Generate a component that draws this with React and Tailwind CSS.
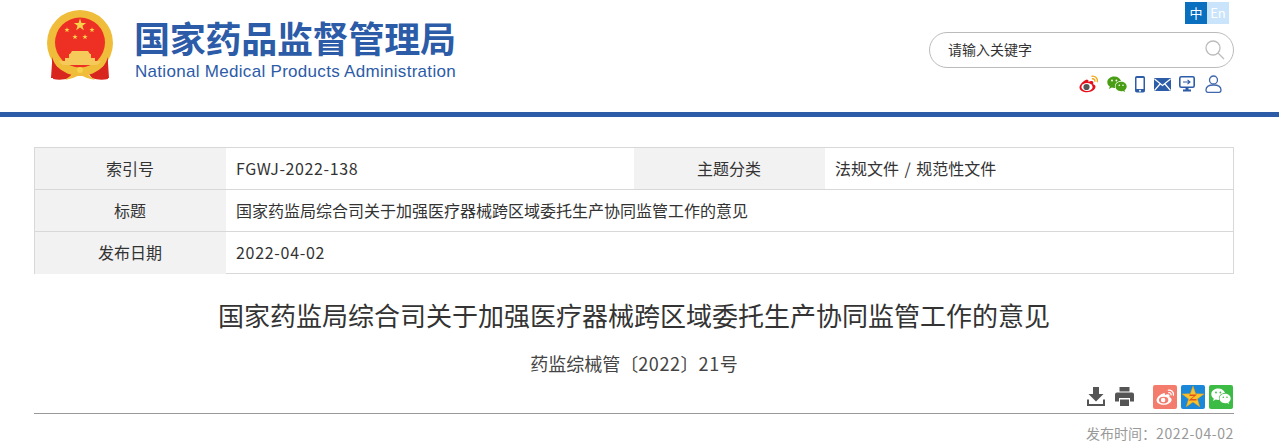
import React from 'react';

const cjk = { fontFamily: '"Noto Sans CJK SC", sans-serif' };

const star = (cx, cy, r, rot = 0) => {
  const pts = [];
  for (let i = 0; i < 10; i++) {
    const rad = i % 2 ? r * 0.4 : r;
    const a = ((-90 + i * 36 + rot) * Math.PI) / 180;
    pts.push(`${(cx + rad * Math.cos(a)).toFixed(2)},${(cy + rad * Math.sin(a)).toFixed(2)}`);
  }
  return pts.join(' ');
};

const Emblem = () => (
  <svg width="67" height="71" viewBox="0 0 67 71">
    <path d="M8 52l-2 17c5 1 11 1 16-1l4-5h15l4 5c5 2 11 2 16 1l-2-17z" fill="#d8261f" />
    <circle cx="33" cy="33" r="33" fill="#f0bd3a" />
    <circle cx="33" cy="32.500" r="25" fill="#ee2f24" />
    <polygon points={star(33, 15, 6.5)} fill="#f8d24a" />
    <polygon points={star(20, 20, 2.8)} fill="#f8d24a" />
    <polygon points={star(45, 20, 2.8)} fill="#f8d24a" />
    <polygon points={star(28, 27, 2.8)} fill="#f8d24a" />
    <polygon points={star(38, 27, 2.8)} fill="#f8d24a" />
    <path d="M25 41h16l2 3H23zM22 44h22v4H22zM18 48h30v3H18zM12 51h42v4H12z" fill="#f5c95a" />
    <path d="M5 47c3 9 6 11 9 14l-1 6c-3 1-6 1-9 1l1-15zM61 47c-3 9-6 11-9 14l1 6c3 1 6 1 9 1l-1-15z" fill="#d8261f" />
    <path d="M9 50c6 8 14 11 24 11s18-3 24-11" fill="none" stroke="#f0bd3a" strokeWidth="2.500" />
    <path d="M24 59h18l-3 5H27zM18 70l9-7h12l9 7-8-2-7-3-7 3z" fill="#f0bd3a" />
    <circle cx="33" cy="60" r="3" fill="#f8d24a" />
  </svg>
);

const WeiboHead = () => (
  <svg width="20" height="18" viewBox="0 0 20 18">
    <path d="M8 4.500C4.500 5.500 0.500 9.500 0.500 12.500c0 3 3.700 4.800 7.500 4.800 4.500 0 8.500-2.800 8.500-5.500 0-1.500-1.300-2.300-2.400-2.600.5-1.500.3-2.700-1-3.100-1-.3-2.600.2-3.600.8.200-1.300-.2-2.800-1.500-1.900z" fill="#e3101c" />
    <ellipse cx="8" cy="12" rx="5.600" ry="4" fill="#fff" />
    <circle cx="7.500" cy="12" r="3.100" fill="#555" />
    <path d="M13 1.200c3-.5 6 2 5.400 5.400M13.500 3.800c1.500-.2 2.600 1 2.400 2.400" fill="none" stroke="#f2a91a" strokeWidth="1.400" strokeLinecap="round" />
  </svg>
);

const WechatPair = ({ a, b, eye, size = 20 }) => (
  <svg width={size} height={size * 0.85} viewBox="0 0 20 17">
    <path d="M7.200 0.500C3.300 0.500 0.300 3 0.300 6.200c0 1.800 1 3.400 2.500 4.400L2 13l2.800-1.400c.8.200 1.600.3 2.400.3.300 0 .6 0 .9 0a5.300 5.300 0 01-.2-1.400C7.900 7.300 10.800 5 14 5.100 13.300 2.400 10.500.5 7.200.5z" fill={a} />
    <path d="M19.700 10.500c0-2.700-2.600-4.700-5.600-4.700-3.100 0-5.600 2-5.600 4.700s2.500 4.700 5.600 4.700c.6 0 1.300-.1 1.900-.3l2.100 1.200-.6-1.900c1.400-.9 2.200-2.200 2.200-3.700z" fill={b} />
    <circle cx="5" cy="4.500" r=".9" fill={eye} />
    <circle cx="9.400" cy="4.500" r=".9" fill={eye} />
    <circle cx="12.300" cy="9.300" r=".8" fill={eye} />
    <circle cx="16" cy="9.300" r=".8" fill={eye} />
  </svg>
);

const Phone = () => (
  <svg width="10" height="17" viewBox="0 0 10 17">
    <rect x="0" y="0" width="10" height="16.500" rx="1.800" fill="#2d5ca8" />
    <rect x="1.500" y="2" width="7" height="11" fill="#fff" />
    <circle cx="5" cy="14.800" r="1" fill="#fff" />
  </svg>
);

const Mail = () => (
  <svg width="17" height="13" viewBox="0 0 17 13">
    <rect width="17" height="13" rx="1" fill="#2d5ca8" />
    <path d="M0.500 1l8 6.500 8-6.500M0.500 12.500l5.500-6.500M16.500 12.500l-5.500-6.500" fill="none" stroke="#fff" strokeWidth="1.200" />
  </svg>
);

const Monitor = () => (
  <svg width="16" height="16" viewBox="0 0 16 16">
    <rect x="0.800" y="0.800" width="14.400" height="10.400" rx="1.500" fill="#fff" stroke="#2d5ca8" strokeWidth="1.600" />
    <path d="M6.500 11.500h3v2h-3zM4 13.500h8V15.500H4z" fill="#2d5ca8" />
    <path d="M4 6h7M8.500 3.800L11 6 8.500 8.200" fill="none" stroke="#2d5ca8" strokeWidth="1.100" />
  </svg>
);

const User = () => (
  <svg width="17" height="18" viewBox="0 0 17 18">
    <circle cx="8.500" cy="5" r="4" fill="none" stroke="#3e67ad" strokeWidth="1.300" />
    <path d="M1 15c0-3 3-5 7.500-5s7.500 2 7.500 5c0 1.500-.8 2.300-2 2.300H3c-1.200 0-2-.8-2-2.300z" fill="none" stroke="#3e67ad" strokeWidth="1.300" />
  </svg>
);

const TableRow = ({ cells }) => (
  <div className="flex h-[42px] border-b border-[#d8d8d8] last:border-b-0 text-[16px] text-[#333]">
    {cells}
  </div>
);

const Label = ({ children }) => (
  <div className="w-[191px] shrink-0 flex items-center justify-center pb-[2px] pr-[1px] bg-[#f2f2f2]">{children}</div>
);

const Value = ({ children, className = '' }) => (
  <div className={`flex items-center pl-[10px] pb-[2px] ${className}`}>{children}</div>
);

const App = () => {
  return (
    <div className="h-[444px] overflow-hidden bg-white" style={cjk}>
      {/* Header */}
      <header className="h-[117px] border-b-[5px] border-[#2c5ba8] flex justify-between pl-[47px] pr-[45px]">
        <div className="flex items-start pt-[10px]">
          <Emblem />
          <div className="ml-[20px] text-[#2c5ba8]">
            <div className="text-[36px] leading-[44px] font-bold tracking-[-0.25px] whitespace-nowrap mt-[5px]">国家药品监督管理局</div>
            <div className="ml-[1px] text-[17px] leading-[20px] tracking-[0.3px] mt-[3px] whitespace-nowrap" style={{ fontFamily: '"Liberation Sans", sans-serif' }}>
              National Medical Products Administration
            </div>
          </div>
        </div>

        <div className="w-[305px] flex flex-col">
          <div className="flex justify-end pr-[5px] pt-[2px]">
            <span className="w-[22px] h-[22px] flex items-center justify-center bg-[#0a6fbf] text-white text-[13px]">中</span>
            <span className="w-[22px] h-[22px] flex items-center justify-center bg-[#c9e4fb] text-white text-[13px]">En</span>
          </div>
          <div className="mt-[8px] h-[36px] border border-[#bbb] rounded-full flex items-center justify-between pl-[18px] pr-[8px]">
            <span className="text-[14px] text-[#333] pb-[2px]">请输入关键字</span>
            <svg width="20" height="20" viewBox="0 0 20 20" fill="none" stroke="#bcbcbc" strokeWidth="1.300">
              <circle cx="8" cy="8" r="7" />
              <path d="M13 13l6 6" />
            </svg>
          </div>
          <div className="mt-[7px] flex items-center justify-end pr-[12px]">
            <WeiboHead />
            <span className="ml-[8px]"><WechatPair a="#4a9e16" b="#4a9e16" eye="#fff" /></span>
            <span className="ml-[8px]"><Phone /></span>
            <span className="ml-[9px]"><Mail /></span>
            <span className="ml-[8px]"><Monitor /></span>
            <span className="ml-[10px]"><User /></span>
          </div>
        </div>
      </header>

      <main className="pl-[34px]">
        {/* Info table */}
        <div className="mt-[30px] w-[1200px] h-[127px] border border-[#d8d8d8]">
          <TableRow
            cells={
              <>
                <Label>索引号</Label>
                <Value className="w-[408px] tracking-[0.6px]">FGWJ-2022-138</Value>
                <Label>主题分类</Label>
                <Value>法规文件<span className="mx-[5.500px]">/</span>规范性文件</Value>
              </>
            }
          />
          <TableRow
            cells={
              <>
                <Label>标题</Label>
                <Value>国家药监局综合司关于加强医疗器械跨区域委托生产协同监管工作的意见</Value>
              </>
            }
          />
          <TableRow
            cells={
              <>
                <Label>发布日期</Label>
                <Value className="tracking-[0.7px]">2022-04-02</Value>
              </>
            }
          />
        </div>

        {/* Article head */}
        <div className="w-[1200px]">
          <h1 className="mt-[22px] text-center text-[26px] leading-[38px] text-[#333]">
            国家药监局综合司关于加强医疗器械跨区域委托生产协同监管工作的意见
          </h1>
          <p className="mt-[17px] text-center text-[18px] leading-[24px] text-[#444]">
            药监综械管〔<span className="tracking-[0.6px]">2022</span>〕<span className="tracking-[0.6px]">21</span>号
          </p>

          <div className="h-[30px] mt-[9px] flex items-center justify-end border-b border-[#999] pb-[4px] pr-[1px]">
            <svg width="18" height="19" viewBox="0 0 18 19" fill="#555">
              <path d="M6 0h6v7h4.500L9 14.500 1.500 7H6z" />
              <path d="M0 12.500h2V17h14v-4.500h2V19H0z" />
            </svg>
            <svg className="ml-[10px]" width="19" height="19" viewBox="0 0 19 19" fill="#555">
              <path d="M4.500 0h10v4.500h-10z" />
              <path d="M2 5.500h15a2 2 0 012 2v7h-4V11H4v3.500H0v-7a2 2 0 012-2z" />
              <path d="M5 12.500h9V19H5z" />
            </svg>
            <span className="ml-[19px] w-[24px] h-[24px] rounded-[2px] bg-[#f47c6c] flex items-center justify-center">
              <svg width="19" height="16" viewBox="0 0 20 17">
                <path d="M8 4.500C4.500 5.500.5 9 .5 12c0 3 3.700 4.800 7.500 4.800 4.500 0 8.500-2.800 8.500-5.500 0-1.500-1.300-2.300-2.400-2.600.5-1.500.3-2.700-1-3.100-1-.3-2.600.2-3.600.8.200-1.300-.2-2.800-1.500-1.900z" fill="#fff" />
                <ellipse cx="8" cy="11.800" rx="5" ry="3.600" fill="#f47c6c" />
                <circle cx="7.500" cy="11.800" r="2.400" fill="#fff" />
                <path d="M13 1.200c3-.5 6 2 5.400 5.400M13.500 3.800c1.500-.2 2.600 1 2.400 2.400" fill="none" stroke="#fff" strokeWidth="1.400" strokeLinecap="round" />
              </svg>
            </span>
            <span className="ml-[4px] w-[24px] h-[24px] rounded-[2px] bg-[#1a87d8] flex items-center justify-center">
              <svg width="22" height="21" viewBox="0 0 22 21">
                <polygon points={star(11, 11.500, 11.500)} fill="#f8c32c" stroke="#e8a312" strokeWidth=".5" />
                <path d="M7.500 8.500h7.500L9.500 13h5v1.500H6.500L12 10H7.500z" fill="#e0501e" />
              </svg>
            </span>
            <span className="ml-[4px] w-[24px] h-[24px] rounded-[2px] bg-[#3cbb45] flex items-center justify-center">
              <WechatPair a="#fff" b="#fff" eye="#3cbb45" />
            </span>
          </div>

          <div className="mt-[9px] text-right text-[14px] leading-[20px] text-[#999]">
            发布时间：<span className="tracking-[0.6px]">2022-04-02</span>
          </div>
        </div>
      </main>
    </div>
  );
};

export default App;
